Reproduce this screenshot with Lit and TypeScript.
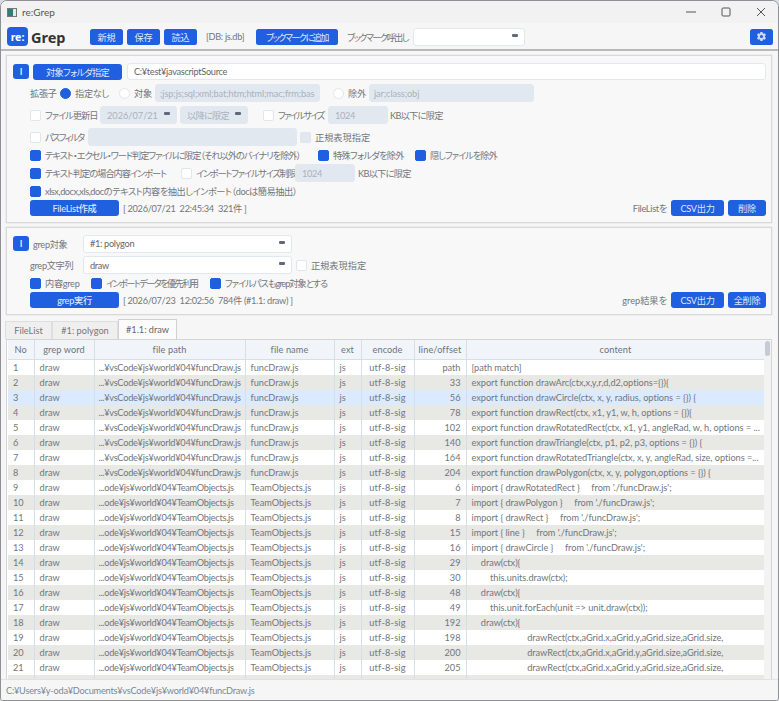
import { LitElement, html, css, svg } from "lit";
import { customElement } from "lit/decorators.js";

const P1 = "...¥vsCode¥js¥world¥04¥funcDraw.js";
const P2 = "...ode¥js¥world¥04¥TeamObjects.js";
const F1 = "funcDraw.js";
const F2 = "TeamObjects.js";
const rows: [string, string, string, string][] = [
  [P1, F1, "path", "[path match]"],
  [P1, F1, "33", "export function drawArc(ctx,x,y,r,d,d2,options={}){"],
  [P1, F1, "56", "export function drawCircle(ctx, x, y, radius, options = {}) {"],
  [P1, F1, "78", "export function drawRect(ctx, x1, y1, w, h, options = {}){"],
  [P1, F1, "102", "export function drawRotatedRect(ctx, x1, y1, angleRad, w, h, options = ..."],
  [P1, F1, "140", "export function drawTriangle(ctx, p1, p2, p3, options = {}) {"],
  [P1, F1, "164", "export function drawRotatedTriangle(ctx, x, y, angleRad, size, options =..."],
  [P1, F1, "204", "export function drawPolygon(ctx, x, y, polygon,options = {}) {"],
  [P2, F2, "6", "import { drawRotatedRect }     from './funcDraw.js';"],
  [P2, F2, "7", "import { drawPolygon }     from './funcDraw.js';"],
  [P2, F2, "8", "import { drawRect }     from './funcDraw.js';"],
  [P2, F2, "15", "import { line }     from './funcDraw.js';"],
  [P2, F2, "16", "import { drawCircle }     from './funcDraw.js';"],
  [P2, F2, "29", "    draw(ctx){"],
  [P2, F2, "30", "        this.units.draw(ctx);"],
  [P2, F2, "48", "    draw(ctx){"],
  [P2, F2, "49", "        this.unit.forEach(unit => unit.draw(ctx));"],
  [P2, F2, "192", "    draw(ctx){"],
  [P2, F2, "198", "                        drawRect(ctx,aGrid.x,aGrid.y,aGrid.size,aGrid.size,"],
  [P2, F2, "200", "                        drawRect(ctx,aGrid.x,aGrid.y,aGrid.size,aGrid.size,"],
  [P2, F2, "205", "                        drawRect(ctx,aGrid.x,aGrid.y,aGrid.size,aGrid.size,"],
];

const gear = svg`<path fill="currentColor" d="M19.4 13c.04-.33.06-.66.06-1s-.02-.67-.06-1l2.1-1.65a.5.5 0 0 0 .12-.64l-2-3.46a.5.5 0 0 0-.61-.22l-2.49 1a7.3 7.3 0 0 0-1.73-1l-.38-2.65A.49.49 0 0 0 13.9 2h-4a.49.49 0 0 0-.49.42l-.38 2.65c-.62.25-1.2.59-1.73 1l-2.49-1a.5.5 0 0 0-.61.22l-2 3.46a.49.49 0 0 0 .12.64L4.42 11a7.9 7.9 0 0 0 0 2l-2.1 1.65a.5.5 0 0 0-.12.64l2 3.46c.12.22.39.3.61.22l2.49-1c.53.41 1.11.75 1.73 1l.38 2.65c.03.24.25.42.49.42h4c.25 0 .46-.18.49-.42l.38-2.65c.62-.25 1.2-.59 1.73-1l2.49 1c.22.08.49 0 .61-.22l2-3.46a.5.5 0 0 0-.12-.64L19.4 13zM11.9 15.5a3.5 3.5 0 1 1 0-7 3.5 3.5 0 0 1 0 7z"/>`;

@customElement("app-root")
export class AppRoot extends LitElement {
  static styles = css`
    :host { display: block; width: 779px; height: 701px; background: #d8dde2;
      font-family: Lato, "Noto Sans CJK JP", sans-serif; font-size: 9.2px; letter-spacing: -0.3px; font-feature-settings: "palt"; color: #72767c; }
    * { box-sizing: border-box; }
    .k { letter-spacing: -1px; }
    .k2 { letter-spacing: -0.7px; }
    .k3 { letter-spacing: -0.45px; }
    .k4 { letter-spacing: -1.6px; }
    .k5 { letter-spacing: -1.2px; }
    .k0 { letter-spacing: 0; }
    .win { width: 779px; height: 701px; border: 1px solid #8d9196; border-radius: 7px 7px 3px 3px;
      background: #f6f6f6; display: flex; flex-direction: column; overflow: hidden; }
    .title { height: 22px; flex: none; background: #f2f2f2; display: flex; align-items: center; padding-left: 6px; color: #555; font-size: 10px; letter-spacing: 0; }
    .ticon { width: 10px; height: 9px; border: 1px solid #777; background: linear-gradient(90deg,#2f7f76 0 5px,#e8e8e8 5px); margin-right: 5px; }
    .tname { flex: 1; }
    .wbtn { width: 35px; height: 22px; display: flex; align-items: center; justify-content: center; }
    .wbtn svg { width: 10px; height: 10px; stroke: #555; fill: none; stroke-width: 1; }
    .head { height: 28px; flex: none; display: flex; align-items: center; padding: 0 5px 0 6px; border-bottom: 2px solid #b9b9b9; margin-bottom: 4px; }
    .head-in { display: flex; align-items: center; width: 100%; height: 24px; margin-top: 1px; }
    .logo { width: 21px; height: 19px; border-radius: 4px; background: #1f5fe0; color: #fff; font: 700 10.5px "Noto Sans", sans-serif; letter-spacing: 0; display: flex; align-items: center; justify-content: center; }
    .lname { font: 700 14.5px "Noto Sans", sans-serif; letter-spacing: 0; color: #333; margin-left: 3px; width: 59px; }
    button { border: none; background: #1f5fe0; color: #dfe8fb; border-radius: 2.5px; font: inherit; letter-spacing: inherit; font-feature-settings: inherit; height: 16px; padding: 0; display: flex; align-items: center; justify-content: center; flex: none; white-space: nowrap; }
    .b33 { width: 33px; margin-right: 4px; }
    .db { margin: 0 0 0 5px; width: 50px; }
    .bm { width: 82px; }
    .bml { margin-left: 9px; width: 66px; white-space: nowrap; }
    .gear { width: 23px; margin-left: auto; margin-right: 0; }
    .gear svg { width: 11px; height: 11px; color: #cdd9f5; }
    .field { background: #fff; border: 1px solid #e2e8f0; border-radius: 3px; height: 18px; display: flex; align-items: center; padding: 0 4px 0 6px; color: #666; flex: none; position: relative; white-space: nowrap; overflow: hidden; }
    .field.sel::after { content: ""; position: absolute; right: 6px; top: 5px; width: 6px; height: 3px; background: #5f6b7c; border-radius: 1px; }
    .field.dis { background: #e2e8f0; color: #a9b1bd; }
    .field.ext { width: 165px; margin-left: 3px; padding-left: 4px; letter-spacing: -0.1px; }
    .panel { border: 1px solid #d9d9d9; box-shadow: 0 0 0 .5px #e4e4e4; background: #f8f8f8; margin: 0 6px 0 5px; padding: 7px 5px 0 6px; flex: none; }
    .p1 { height: 168px; }
    .p2 { height: 88px; margin-top: 4px; }
    .row { display: flex; align-items: center; white-space: nowrap; }
    .r17 { height: 17px; } .r18 { height: 18px; } .r12 { height: 12px; } .r16 { height: 16px; }
    .gap4 { margin-top: 4px; } .gap3 { margin-top: 3px; }
    .ind { margin-left: 17px; }
    .ibtn { width: 16px; height: 15px; font-weight: 700; margin-right: 4px; border-radius: 3px; }
    .pick { width: 89px; margin-right: 5px; border-radius: 3px; height: 16px; }
    .grow { flex: 1; height: 17px; margin-right: 0; }
    .cb { width: 11px; height: 11px; border-radius: 2px; border: 1px solid #e1e6ec; background: #fff; flex: none; margin-right: 4px; }
    .cb.on { background: #1f5fe0; border-color: #1f5fe0; }
    .cb.dis { background: #e2e8f0; }
    .rd { width: 11px; height: 11px; border-radius: 50%; border: 1px solid #e1e6ec; background: #fff; flex: none; margin-right: 4px; }
    .rd.on { background: #1f5fe0; border-color: #1f5fe0; }
    .runb { width: 89px; height: 16px; margin-right: 4px; border-radius: 3px; font-weight: 500; }
    .right { margin-left: auto; display: flex; align-items: center; }
    .csv { width: 53px; margin: 0 4px; border-radius: 3px; }
    .del { width: 38px; border-radius: 3px; }
    .tabs { display: flex; align-items: flex-end; height: 20px; margin: 4px 0 0 4px; flex: none; }
    .tab { height: 18px; border: 1px solid #dedede; border-bottom: none; background: #efefef; display: flex; align-items: center; justify-content: center; color: #777; letter-spacing: 0; }
    .tab.active { height: 20px; background: #fbfbfb; border-color: #d0d0d0; color: #666; }
    .t1 { width: 47px; } .t2 { width: 66px; } .t3 { width: 59px; }
    .tw { flex: none; height: 340px; margin: 0 6px 0 5px; display: flex; border: 1px solid #d5d5d5; border-bottom: none; padding-left: 1px; overflow: hidden; background: #fff; }
    .scroll { flex: 1; overflow: hidden; }
    table { border-collapse: collapse; table-layout: fixed; width: 757px; }
    th { height: 19px; background: #f1f5f9; font-weight: 400; color: #6b7280; border-right: 1px solid #d5dfea; border-bottom: 1px solid #d5dfea; padding: 0; letter-spacing: 0.1px; }
    td { height: 15px; border-right: 1px solid #d5dfea; padding: 0 5px; white-space: pre; overflow: hidden; color: #72767c; line-height: 15px; letter-spacing: 0; }
    tr.z td { background: #e8e8e5; }
    tr.h td { background: #dbeafe; }
    td.n { text-align: right; }
    td.c { text-align: center; padding: 0; letter-spacing: 0.2px; }
    td.p { padding: 0 0 0 4px; letter-spacing: -0.25px; }
    td.m { padding-left: 5px; letter-spacing: -0.03px; }
    .sb { width: 7px; flex: none; background: #f3f3f3; padding: 0 1px; }
    .th { height: 15px; background: #c3cbd6; border-radius: 3px; margin-top: 1px; }
    .status { flex: 1; display: flex; align-items: center; padding-left: 5px; color: #7c8794; background: #f6f6f6; border-top: 1px solid #e2e2e2; letter-spacing: -0.22px; }
    .w-ext { width: 30px; }
    .ml12 { margin-left: 12px; } .ml13 { margin-left: 13px; }
  `;

  private cb(on = false, text = "", cls = "") {
    return html`<span class="cb ${on ? "on" : ""}"></span>${text ? html`<span class="${cls}">${text}</span>` : ""}`;
  }

  private tableRows() {
    return html`${rows.map(
      (r, i) => html`<tr class="${i === 2 ? "h" : i % 2 === 1 ? "z" : ""}">
        <td>${i + 1}</td><td>draw</td><td class="p">${r[0]}</td><td>${r[1]}</td><td>js</td><td class="c">utf-8-sig</td><td class="n">${r[2]}</td><td class="m">${r[3]}</td>
      </tr>`
    )}<tr class="z"><td></td><td></td><td></td><td></td><td></td><td></td><td></td><td></td></tr>`;
  }

  render() {
    return html`<div class="win">
      <div class="title"><span class="ticon"></span><span class="tname">re:Grep</span>
        <span class="wbtn"><svg viewBox="0 0 10 10"><path d="M0 5h10"/></svg></span>
        <span class="wbtn"><svg viewBox="0 0 10 10"><rect x="1" y="1" width="8" height="8" rx="1"/></svg></span>
        <span class="wbtn"><svg viewBox="0 0 10 10"><path d="M1 1l8 8M9 1l-8 8"/></svg></span>
      </div>
      <div class="head"><div class="head-in">
        <span class="logo">re:</span><span class="lname">Grep</span>
        <button class="b33">新規</button><button class="b33">保存</button><button class="b33">読込</button>
        <span class="db">[DB: js.db]</span>
        <button class="bm k4">ブックマークに追加</button>
        <span class="bml k4">ブックマーク呼出し</span>
        <span class="field sel" style="width:112px"></span>
        <button class="gear"><svg viewBox="0 0 24 24">${gear}</svg></button>
      </div></div>

      <div class="panel p1">
        <div class="row r17"><button class="ibtn">I</button><button class="pick k2">対象フォルダ指定</button>
          <span class="field grow">C:¥test¥javascriptSource</span></div>
        <div class="row r18 gap4 ind"><span class="w-ext">拡張子</span>
          <span class="rd on"></span><span style="width:32px">指定なし</span>
          <span class="rd ml12"></span><span style="width:18px">対象</span>
          <span class="field dis ext">;jsp;js;sql;xml;bat;htm;html;mac;frm;bas</span>
          <span class="rd ml13"></span><span style="width:18px">除外</span>
          <span class="field dis ext">jar;class;obj</span></div>
        <div class="row r18 gap4 ind">${this.cb()}<span class="k" style="width:55px">ファイル更新日</span>
          <span class="field dis sel k0" style="width:77px">2026/07/21</span>
          <span class="field dis sel k2" style="width:68px;margin-left:3px">以降に限定</span>
          <span class="cb" style="margin-left:15px"></span><span class="k4" style="width:50px">ファイルサイズ</span>
          <span class="field dis" style="width:60px">1024</span>
          <span class="k2" style="margin-left:2px">KB以下に限定</span></div>
        <div class="row r18 gap4 ind">${this.cb()}<span class="k4" style="width:43px">パスフィルタ</span>
          <span class="field dis" style="width:209px"></span>
          <span class="cb dis" style="margin-left:3px"></span><span class="k0">正規表現指定</span></div>
        <div class="row r12 gap3 ind">${this.cb(true)}<span class="k" style="width:273px">テキスト・エクセル・ワード判定ファイルに限定（それ以外のバイナリを除外）</span>
          ${this.cb(true)}<span class="k2" style="width:82px">特殊フォルダを除外</span>${this.cb(true, "隠しファイルを除外", "k")}</div>
        <div class="row r18 gap3 ind">${this.cb(true)}<span class="k" style="width:136px">テキスト判定の場合内容インポート</span>
          ${this.cb()}<span class="k5" style="width:99px">インポートファイルサイズ制限</span>
          <span class="field dis" style="width:60px">1024</span><span class="k2" style="margin-left:3px">KB以下に限定</span></div>
        <div class="row r12 gap3 ind">${this.cb(true, "xlsx,docx,xls,docのテキスト内容を抽出しインポート（docは簡易抽出）", "k3")}</div>
        <div class="row r16 gap3 ind"><button class="runb">FileList作成</button><span>[ 2026/07/21&nbsp; 22:45:34&nbsp; 321件 ]</span>
          <span class="right">FileListを<button class="csv">CSV出力</button><button class="del">削除</button></span></div>
      </div>

      <div class="panel p2">
        <div class="row r17"><button class="ibtn">I</button><span style="width:50px">grep対象</span>
          <span class="field sel" style="width:209px">#1: polygon</span></div>
        <div class="row r18 gap4 ind"><span style="width:53px">grep文字列</span>
          <span class="field sel" style="width:209px">draw</span>
          <span class="cb" style="margin-left:4px"></span><span class="k0">正規表現指定</span></div>
        <div class="row r12 gap3 ind">${this.cb(true)}<span style="width:46px">内容grep</span>
          ${this.cb(true)}<span class="k4" style="width:104px">インポートデータを優先利用</span>${this.cb(true, "ファイルパスもgrep対象とする", "k")}</div>
        <div class="row r16 gap3 ind"><button class="runb">grep実行</button><span>[ 2026/07/23&nbsp; 12:02:56&nbsp; 784件 (#1.1: draw) ]</span>
          <span class="right"><span class="k0">grep結果を</span><button class="csv">CSV出力</button><button class="del">全削除</button></span></div>
      </div>

      <div class="tabs"><span class="tab t1">FileList</span><span class="tab t2">#1: polygon</span><span class="tab active t3">#1.1: draw</span></div>
      <div class="tw"><div class="scroll"><table>
        <colgroup><col style="width:26px"/><col style="width:60px"/><col style="width:151px"/><col style="width:89px"/><col style="width:27px"/><col style="width:53px"/><col style="width:52px"/><col style="width:299px"/></colgroup>
        <thead><tr><th>No</th><th>grep word</th><th>file path</th><th>file name</th><th>ext</th><th>encode</th><th>line/offset</th><th>content</th></tr></thead>
        <tbody>${this.tableRows()}</tbody>
      </table></div><div class="sb"><div class="th"></div></div></div>
      <div class="status">C:¥Users¥y-oda¥Documents¥vsCode¥js¥world¥04¥funcDraw.js</div>
    </div>`;
  }
}
